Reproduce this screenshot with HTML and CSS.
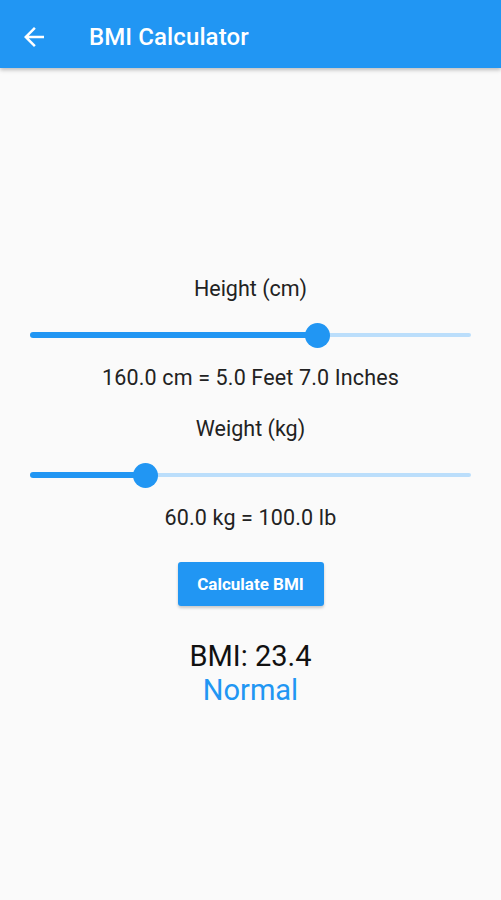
FILE: index.html
```html
<!DOCTYPE html>
<html>
<head>
<meta charset="utf-8">
<link rel="stylesheet" href="styles.css">
</head>
<body>
<header class="appbar">
  <svg class="back" width="30" height="30" viewBox="0 0 24 24"><path d="M20 11H7.83l5.59-5.59L12 4l-8 8 8 8 1.41-1.41L7.83 13H20v-2z" fill="#fff"/></svg>
  <h1 class="title">BMI Calculator</h1>
</header>
<main class="content">
  <div class="label">Height (cm)</div>
  <div class="slider">
    <div class="active" style="width:65.3%"></div>
    <div class="thumb"></div>
    <div class="inactive"></div>
  </div>
  <div class="value">160.0 cm = 5.0 Feet 7.0 Inches</div>
  <div class="label second">Weight (kg)</div>
  <div class="slider">
    <div class="active" style="width:26.3%"></div>
    <div class="thumb"></div>
    <div class="inactive"></div>
  </div>
  <div class="value">60.0 kg = 100.0 lb</div>
  <button class="calc">Calculate BMI</button>
  <div class="bmi">BMI: 23.4</div>
  <div class="status">Normal</div>
</main>
</body>
</html>
```
FILE: styles.css
```css
html, body {
  margin: 0;
  padding: 0;
  background: #fafafa;
  font-family: Roboto, "Noto Sans", sans-serif;
  height: 100%;
}
.appbar {
  height: 63px;
  padding-top: 5px;
  background: #2196f3;
  display: flex;
  align-items: center;
  padding-left: 19px;
  box-shadow: 0 2px 4px rgba(0,0,0,0.25);
  position: relative;
  z-index: 1;
}
.back {
  display: block;
}
.title {
  margin: 0 0 0 40px;
  color: #fff;
  font-size: 24px;
  font-weight: 500;
  letter-spacing: 0.1px;
}
.content {
  display: flex;
  flex-direction: column;
  align-items: center;
  padding: 210px 30px 0;
}
.label, .value {
  font-size: 21.5px;
  line-height: 22px;
  color: #222;
}
.value {
  letter-spacing: 0.15px;
}
.label.second {
  margin-top: 29px;
}
.slider {
  align-self: stretch;
  height: 48px;
  margin-top: 11px;
  display: flex;
  align-items: center;
}
.active {
  height: 6px;
  background: #2196f3;
  border-radius: 3px 0 0 3px;
}
.thumb {
  width: 25px;
  height: 25px;
  border-radius: 50%;
  background: #2196f3;
  margin: 0 -12.5px;
  position: relative;
  z-index: 1;
  flex: none;
}
.inactive {
  flex: 1;
  height: 4px;
  background: #bbdefb;
  border-radius: 0 2px 2px 0;
}
.value {
  margin-top: 8px;
}
.calc {
  margin-top: 33px;
  width: 146px;
  height: 44px;
  border: none;
  border-radius: 3px;
  background: #2196f3;
  color: #fff;
  font-family: Roboto, "Noto Sans", sans-serif;
  font-size: 17px;
  font-weight: 700;
  box-shadow: 0 2px 3px rgba(0,0,0,0.2);
  padding: 0;
}
.bmi {
  margin-top: 34px;
  font-size: 29px;
  line-height: 32px;
  color: #111;
}
.status {
  margin-top: 2px;
  font-size: 29px;
  line-height: 32px;
  color: #2196f3;
}
```
